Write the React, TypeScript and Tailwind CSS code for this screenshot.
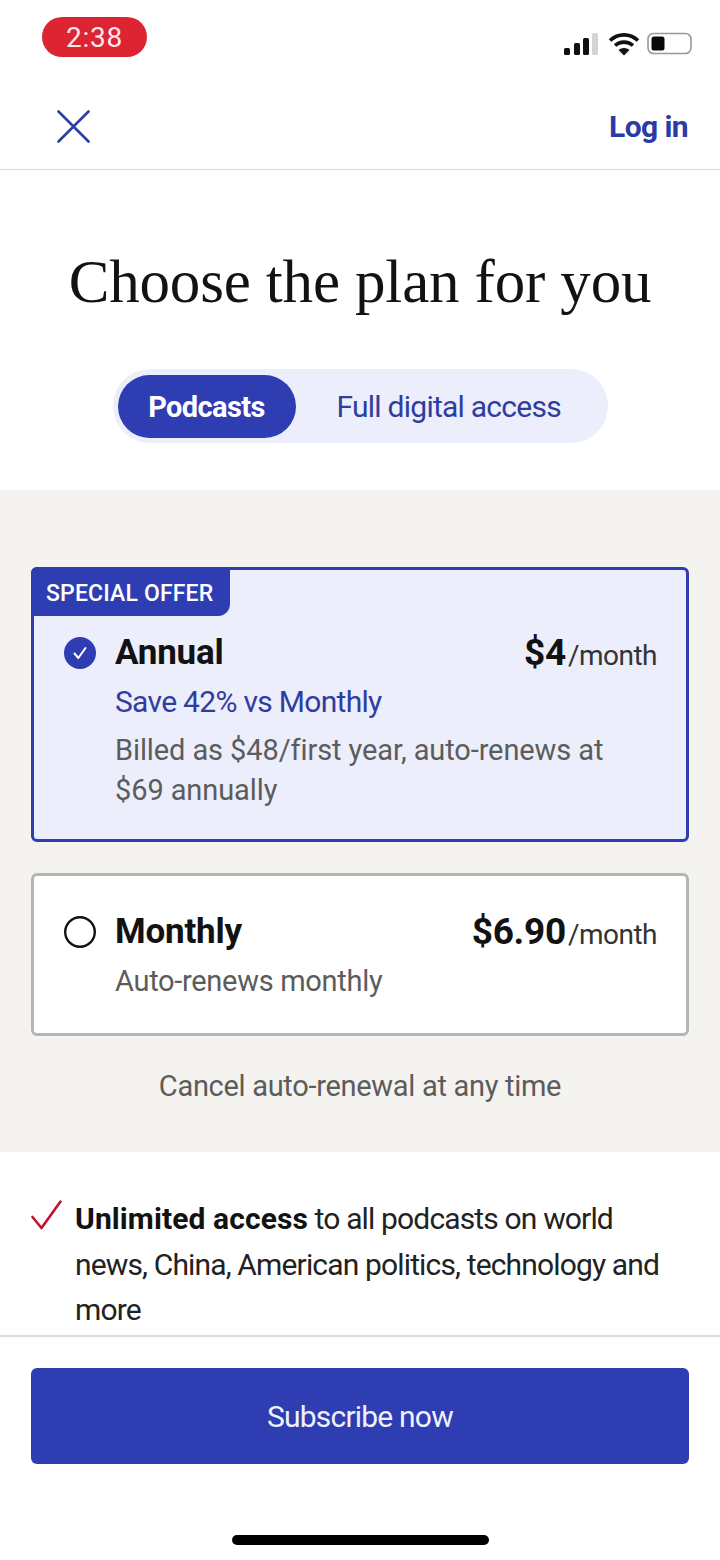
import React from "react";

const Plan = ({ selected, name, price, children }: { selected?: boolean; name: string; price: string; children: React.ReactNode }) => (
  <div className={selected ? "relative rounded-[6px] border-[3px] border-[#2f3db2] bg-[#eceefb] pl-[30px] pr-[29px] pt-[64px] pb-[29px]" : "relative rounded-[6px] border-[3px] border-[#b5b5b5] bg-white pl-[30px] pr-[29px] pt-[37px] pb-[32px]"}>
    {selected && (
      <div className="absolute left-[-3px] top-[-3px] flex h-[49px] w-[199px] items-center rounded-br-[12px] rounded-tl-[6px] bg-[#2f3db2] pl-[15px] pt-[5px] text-[23px] font-medium tracking-[0.15px] text-white">
        SPECIAL OFFER
      </div>
    )}
    <div className="flex h-[38px] items-center justify-between">
      <div className="flex items-center gap-[19px]">
        {selected ? (
          <svg width="32" height="32" viewBox="0 0 32 32">
            <circle cx="16" cy="16" r="16" fill="#2f3db2" />
            <path d="M10.500 16.500l3.800 4.500 7.200-10" fill="none" stroke="#fff" strokeWidth="2" strokeLinecap="round" strokeLinejoin="round" />
          </svg>
        ) : (
          <svg width="32" height="32" viewBox="0 0 32 32">
            <circle cx="16" cy="16" r="14.800" fill="none" stroke="#121212" strokeWidth="2.400" />
          </svg>
        )}
        <span className="text-[35px] font-bold tracking-[-0.2px] text-[#121212]">{name}</span>
      </div>
      <div className="flex items-baseline text-[#121212]">
        <span className="text-[37px] font-bold tracking-[-0.3px]">{price}</span>
        <span className="ml-[2px] text-[28px] tracking-[-0.5px] text-[#333]">/month</span>
      </div>
    </div>
    <div className="pl-[51px]">{children}</div>
  </div>
);

export default function App() {
  return (
    <div className="relative flex h-[1560px] w-[720px] flex-col overflow-hidden bg-white font-['Roboto',sans-serif]">
      <div className="flex h-[88px] shrink-0 items-start justify-between pl-[42px] pr-[28px]">
        <div className="mt-[17px] flex h-[40px] w-[105px] items-center justify-center rounded-[20px] bg-[#dc2433] pt-[1px] text-[28px] tracking-[0.8px] text-[#fbe9ea]">
          2:38
        </div>
        <svg className="mt-[30px]" width="130" height="28" viewBox="0 0 130 28">
          <rect x="2" y="18" width="6" height="7" rx="1.500" fill="#111" />
          <rect x="12" y="13" width="6" height="12" rx="1.500" fill="#111" />
          <rect x="21" y="8" width="6" height="17" rx="1.500" fill="#111" />
          <rect x="30" y="3" width="6" height="22" rx="1.500" fill="#d4d4d4" />
          <path d="M48 10.500c8-7.500 20-7.500 28 0" fill="none" stroke="#111" strokeWidth="3.600" />
          <path d="M53 15.500c5-4.500 13-4.500 18 0" fill="none" stroke="#111" strokeWidth="3.600" />
          <path d="M56.500 20l5.500 5.500 5.500-5.500c-3-2.800-8-2.800-11 0z" fill="#111" />
          <rect x="86" y="3.500" width="43" height="20" rx="5.500" fill="none" stroke="#999" strokeWidth="1.600" />
          <rect x="89.500" y="6.500" width="13" height="14" rx="2.500" fill="#0a0a0a" />
        </svg>
      </div>

      <div className="flex h-[82px] shrink-0 items-center justify-between border-b border-[#d9d9d9] pb-[4px] pl-[57px] pr-[32px]">
        <svg width="33" height="33" viewBox="0 0 33 33">
          <path d="M1.500 1.500l30 30M31.500 1.500l-30 30" stroke="#2f3f9f" strokeWidth="2.600" strokeLinecap="round" />
        </svg>
        <span className="text-[30px] font-bold tracking-[-0.6px] text-[#2b3aa6]">Log in</span>
      </div>

      <h1 className="mt-[70px] h-[84px] text-center font-['Liberation_Serif',serif] text-[61px] leading-[84px] tracking-[-0.15px] text-[#121212]">
        Choose the plan for you
      </h1>

      <div className="mt-[45px] flex justify-center">
        <div className="flex h-[74px] w-[495px] items-center rounded-[37px] bg-[#eceefb] pl-[5px]">
          <div className="flex h-[63px] w-[178px] items-center justify-center rounded-[32px] bg-[#2f3db2] pt-[3px] text-[29px] font-bold tracking-[-0.6px] text-white">
            Podcasts
          </div>
          <div className="ml-[41px] text-[30px] tracking-[-0.75px] text-[#2f3d9f]">Full digital access</div>
        </div>
      </div>

      <div className="mt-[47px] flex h-[662px] shrink-0 flex-col bg-[#f4f3ef] px-[31px] pt-[77px]">
        <Plan selected name="Annual" price="$4">
          <div className="mt-[10px] text-[30px] leading-[40px] tracking-[-0.7px] text-[#2f3d9f]">Save 42% vs Monthly</div>
          <div className="mt-[8px] text-[29px] leading-[40px] tracking-[-0.1px] text-[#5c5c5c]">
            Billed as $48/first year, auto-renews at
            <br />
            $69 annually
          </div>
        </Plan>
        <div className="mt-[31px]">
          <Plan name="Monthly" price="$6.90">
            <div className="mt-[10px] text-[29px] leading-[40px] tracking-[-0.3px] text-[#5c5c5c]">Auto-renews monthly</div>
          </Plan>
        </div>
        <div className="mt-[30px] text-center text-[29px] leading-[40px] tracking-[-0.3px] text-[#5c5c5c]">Cancel auto-renewal at any time</div>
      </div>

      <div className="flex h-[185px] shrink-0 gap-[13px] overflow-hidden border-b-2 border-[#dcdcdc] pl-[31px] pr-[30px] pt-[44px]">
        <svg className="mt-[4px] shrink-0" width="31" height="30" viewBox="0 0 31 30">
          <path d="M1.500 17l9 11L29.500 1.500" fill="none" stroke="#c1122f" strokeWidth="2.600" strokeLinecap="round" strokeLinejoin="round" />
        </svg>
        <div className="text-[30px] leading-[45.5px] tracking-[-0.85px] text-[#222]">
          <span className="font-bold tracking-[0.1px] text-[#121212]">Unlimited access</span> to all podcasts on world
          <br />
          news, China, American politics, technology and
          <br />
          more
        </div>
      </div>

      <div className="px-[31px] pt-[31px]">
        <div className="flex h-[96px] items-center justify-center rounded-[6px] bg-[#2f3db2] text-[30px] tracking-[-0.8px] text-[#eef0fb]">
          Subscribe now
        </div>
      </div>

      <div className="absolute bottom-[15px] left-[232px] h-[10px] w-[257px] rounded-[5px] bg-black" />
    </div>
  );
}
